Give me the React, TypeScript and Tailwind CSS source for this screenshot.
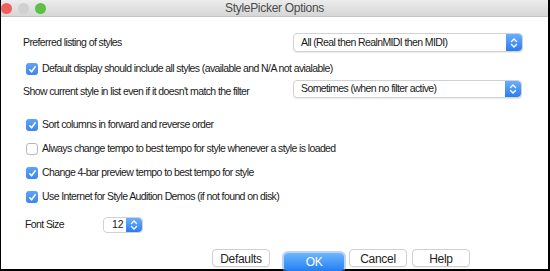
import React from "react";

const font = { fontFamily: '"Liberation Sans", Arial, sans-serif' };

const Stepper = () => (
  <div className="flex h-full w-[16px] items-center justify-center rounded-r-[4px] bg-gradient-to-b from-[#6aaefb] to-[#2a7cf0]">
    <svg width="8" height="12" viewBox="0 0 8 12" fill="none" stroke="white" strokeWidth="1.4" strokeLinecap="round" strokeLinejoin="round">
      <path d="M1.5 4.5 L4 2 L6.5 4.5" />
      <path d="M1.5 7.5 L4 10 L6.5 7.5" />
    </svg>
  </div>
);

const Select = ({ label, width }: { label: string; width: string }) => (
  <div className={`flex h-full ${width} items-stretch rounded-[4px] border border-[#d2d2d2] bg-white shadow-[0_1px_1px_rgba(0,0,0,0.08)]`}>
    <div className="flex flex-1 items-center pl-[7px] text-[10.5px] tracking-[-0.6px] text-[#1a1a1a]">{label}</div>
    <Stepper />
  </div>
);

const Check = ({ checked, label }: { checked: boolean; label: string }) => (
  <div className="flex h-[14px] items-center">
    {checked ? (
      <div className="ml-[3px] flex h-[12px] w-[12px] items-center justify-center rounded-[3px] bg-gradient-to-b from-[#5ea3f6] to-[#3a86ee]">
        <svg width="9" height="9" viewBox="0 0 9 9" fill="none" stroke="white" strokeWidth="1.6" strokeLinecap="round" strokeLinejoin="round">
          <path d="M1.8 4.8 L3.6 6.8 L7.2 1.8" />
        </svg>
      </div>
    ) : (
      <div className="ml-[3px] h-[12px] w-[12px] rounded-[3px] border border-[#b8b8b8] bg-white" />
    )}
    <span className="ml-[4px] whitespace-nowrap text-[10.5px] tracking-[-0.6px] text-[#1a1a1a]">{label}</span>
  </div>
);

const Btn = ({ label, primary }: { label: string; primary?: boolean }) =>
  primary ? (
    <button className="h-[18px] w-[60px] rounded-[4px] bg-gradient-to-b from-[#6db5fb] to-[#1f7ff5] text-[12px] tracking-[-0.3px] text-white shadow-[0_0_0_2px_rgba(120,170,240,0.5)]">
      {label}
    </button>
  ) : (
    <button className="h-[18px] w-[58px] rounded-[4px] border border-[#cfcfcf] bg-white text-[12px] tracking-[-0.3px] text-[#222] shadow-[0_1px_1px_rgba(0,0,0,0.06)]">
      {label}
    </button>
  );

export default function App() {
  return (
    <div
      className="flex h-[271px] w-[550px] flex-col border-b-2 border-l border-r-2 border-black bg-white"
      style={font}
    >
      {/* title bar */}
      <div className="relative flex h-[17px] shrink-0 items-center border-b border-[#c4c4c4] bg-gradient-to-b from-[#ececec] to-[#d6d6d6]">
        <div className="flex gap-[6px]">
          <div className="h-[11px] w-[11px] rounded-full bg-[#f0605a]" />
          <div className="h-[11px] w-[11px] rounded-full bg-[#d0d0d0]" />
          <div className="h-[11px] w-[11px] rounded-full bg-[#5bc044]" />
        </div>
        <div className="absolute inset-0 flex items-center justify-center text-[12px] tracking-[-0.3px] text-[#4a4a4a]">
          StylePicker Options
        </div>
      </div>

      <div className="flex flex-col pl-[22px]">
        <div className="mt-[16px] flex h-[19px] items-center">
          <span className="w-[270px] text-[10.5px] tracking-[-0.6px] text-[#1a1a1a]">Preferred listing of styles</span>
          <Select label="All (Real then RealnMIDI then MIDI)" width="w-[230px]" />
        </div>

        <div className="mt-[10px]">
          <Check checked label="Default display should include all styles (available and N/A not avialable)" />
        </div>

        <div className="mt-[4px] flex h-[18px] items-center">
          <span className="w-[270px] whitespace-nowrap pt-[5px] text-[10.5px] tracking-[-0.6px] text-[#1a1a1a]">
            Show current style in list even if it doesn't match the filter
          </span>
          <Select label="Sometimes (when no filter active)" width="w-[229px]" />
        </div>

        <div className="mt-[20px] flex flex-col gap-[10px]">
          <Check checked label="Sort columns in forward and reverse order" />
          <Check checked={false} label="Always change tempo to best tempo for style whenever a style is loaded" />
          <Check checked label="Change 4-bar preview tempo to best tempo for style" />
          <Check checked label="Use Internet for Style Audition Demos (if not found on disk)" />
        </div>

        <div className="mt-[13px] flex h-[16px] items-center">
          <span className="w-[80px] pl-[2px] text-[10.5px] tracking-[-0.6px] text-[#1a1a1a]">Font Size</span>
          <div className="flex h-full w-[40px] rounded-[4px] border border-[#d2d2d2] bg-white">
            <div className="flex flex-1 items-center pl-[8px] text-[10.5px] text-[#1a1a1a]">12</div>
            <Stepper />
          </div>
        </div>

        <div className="mt-[16px] flex justify-end gap-[5px] pr-[78px]">
          <Btn label="Defaults" />
          <div className="ml-[9px]">
            <Btn label="OK" primary />
          </div>
          <Btn label="Cancel" />
          <Btn label="Help" />
        </div>
      </div>
    </div>
  );
}
